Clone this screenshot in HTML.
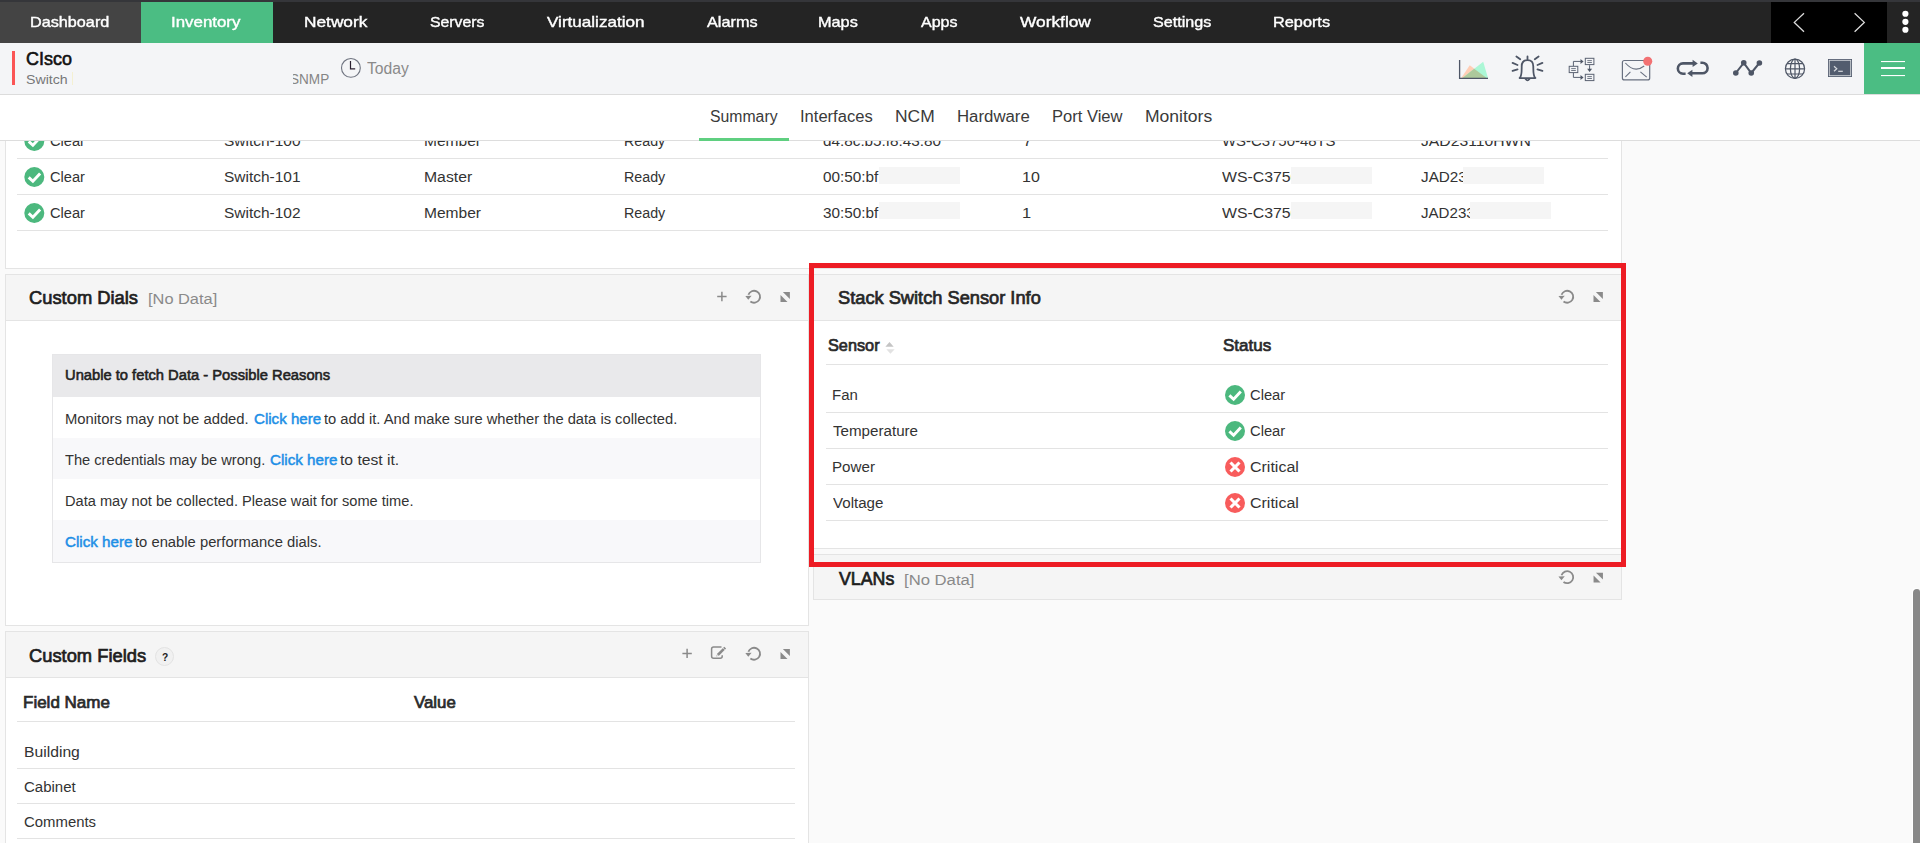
<!DOCTYPE html>
<html><head><meta charset="utf-8"><title>Switch Snapshot</title>
<style>
html,body{margin:0;padding:0}
html{width:1920px;height:843px;overflow:hidden}
body{width:1920px;height:843px;overflow:hidden;background:#fafafa;position:relative;font-family:"Liberation Sans",sans-serif}
.a{position:absolute;box-sizing:border-box}
.t{position:absolute;white-space:nowrap;line-height:1;transform-origin:0 0;font-family:"Liberation Sans",sans-serif}
svg{position:absolute;overflow:visible}
.panel{background:#fff;border:1px solid #e4e4e4}
.phead{background:#f5f5f5;border-bottom:1px solid #e4e4e4}
.ln{background:#e3e3e3;height:1px}
.mask{background:#f5f5f5}
svg.ov{left:0;top:0;pointer-events:none}

</style></head>
<body>
<!-- ===== content panels ===== -->
<div class="a panel" style="left:5px;top:100px;width:1617px;height:169px"></div>
<div class="a ln" style="left:17px;top:158px;width:1591px"></div>
<div class="a ln" style="left:17px;top:194px;width:1591px"></div>
<div class="a ln" style="left:17px;top:230px;width:1591px"></div>
<span class="t" style="left:49.89px;top:133px;font-size:15.5px;font-weight:400;color:#333;transform:scaleX(0.9444)">Clear</span>
<span class="t" style="left:223.65px;top:133px;font-size:15.5px;font-weight:400;color:#333;transform:scaleX(0.9980)">Switch-100</span>
<span class="t" style="left:423.65px;top:133px;font-size:15.5px;font-weight:400;color:#333;transform:scaleX(1.0027)">Member</span>
<span class="t" style="left:624.05px;top:133px;font-size:15.5px;font-weight:400;color:#333;transform:scaleX(0.9195)">Ready</span>
<span class="t" style="left:822.86px;top:133px;font-size:15.5px;font-weight:400;color:#333;transform:scaleX(0.9857)">d4:8c:b5:f8:43:80</span>
<span class="t" style="left:1022.61px;top:133px;font-size:15.5px;font-weight:400;color:#333;transform:scaleX(1.0571)">7</span>
<span class="t" style="left:1221.60px;top:133px;font-size:15.5px;font-weight:400;color:#333;transform:scaleX(0.9620)">WS-C3750-48TS</span>
<span class="t" style="left:1420.75px;top:133px;font-size:15.5px;font-weight:400;color:#333;transform:scaleX(1.0136)">JAD23110HWN</span>
<svg class="ov" width="1920" height="843" viewBox="0 0 1920 843"><circle cx="34.3" cy="141" r="10" fill="#4cb87e"/><path d="M28.699999999999996 141.4 L32.9 145.3 L40.099999999999994 137.4" fill="none" stroke="#fff" stroke-width="2.9" stroke-linecap="butt" stroke-linejoin="miter"/><circle cx="34.3" cy="177" r="10" fill="#4cb87e"/><path d="M28.699999999999996 177.4 L32.9 181.3 L40.099999999999994 173.4" fill="none" stroke="#fff" stroke-width="2.9" stroke-linecap="butt" stroke-linejoin="miter"/><circle cx="34.3" cy="213" r="10" fill="#4cb87e"/><path d="M28.699999999999996 213.4 L32.9 217.3 L40.099999999999994 209.4" fill="none" stroke="#fff" stroke-width="2.9" stroke-linecap="butt" stroke-linejoin="miter"/></svg>

<!-- Custom Dials -->
<div class="a panel" style="left:5px;top:274px;width:804px;height:352px"></div>
<div class="a phead" style="left:6px;top:275px;width:802px;height:46px"></div>
<div class="a" style="left:52px;top:354px;width:709px;height:209px;border:1px solid #e6e6e8;background:#fff"></div>
<div class="a" style="left:53px;top:355px;width:707px;height:42px;background:#e9e9eb"></div>
<div class="a" style="left:53px;top:438px;width:707px;height:41px;background:#f8f8fa"></div>
<div class="a" style="left:53px;top:520px;width:707px;height:42px;background:#f8f8fa"></div>

<!-- VLANs (under sensor) -->
<div class="a panel" style="left:813px;top:554px;width:809px;height:46px;background:#f5f5f5"></div>

<!-- Sensor -->
<div class="a panel" style="left:813px;top:274px;width:809px;height:275px"></div>
<div class="a phead" style="left:814px;top:275px;width:807px;height:46px"></div>
<div class="a ln" style="left:826px;top:364px;width:1782px;width:782px"></div>
<div class="a ln" style="left:826px;top:412px;width:782px"></div>
<div class="a ln" style="left:826px;top:448px;width:782px"></div>
<div class="a ln" style="left:826px;top:484px;width:782px"></div>
<div class="a ln" style="left:826px;top:520px;width:782px"></div>

<!-- Custom Fields -->
<div class="a panel" style="left:5px;top:631px;width:804px;height:212px;border-bottom:0"></div>
<div class="a phead" style="left:6px;top:632px;width:802px;height:46px"></div>
<div class="a ln" style="left:17px;top:721px;width:778px"></div>
<div class="a ln" style="left:17px;top:768px;width:778px"></div>
<div class="a ln" style="left:17px;top:803px;width:778px"></div>
<div class="a ln" style="left:17px;top:838px;width:778px"></div>

<!-- red highlight -->
<div class="a" style="left:809px;top:263px;width:817px;height:304px;border:5px solid #ed1c24"></div>

<!-- scrollbar -->
<div class="a" style="left:1913px;top:589px;width:7px;height:254px;background:#888;border-radius:4px 3px 0 0;box-shadow:-1px -1px 0 0 #fff"></div>

<!-- ===== tab bar ===== -->
<div class="a" style="left:0;top:95px;width:1920px;height:46px;background:#fff;border-bottom:1px solid #ddd"></div>
<div class="a" style="left:699px;top:138px;width:90px;height:3px;background:#5fcf80"></div>

<!-- ===== sub header ===== -->
<div class="a" style="left:0;top:43px;width:1920px;height:52px;background:#f4f5f7;border-bottom:1px solid #dcdcdc"></div>
<div class="a" style="left:12px;top:51px;width:3px;height:34px;background:#fb5555"></div>
<div class="a" style="left:72px;top:72px;width:1px;height:13px;background:#f4f0d2"></div>
<div class="a" style="left:1864px;top:43px;width:56px;height:51px;background:#4bbd83"></div>

<!-- ===== nav ===== -->
<div class="a" style="left:0;top:0;width:1920px;height:43px;background:#242424"></div>
<div class="a" style="left:0;top:0;width:1920px;height:2px;background:#35363a"></div>
<div class="a" style="left:0;top:2px;width:141px;height:41px;background:#444"></div>
<div class="a" style="left:141px;top:2px;width:132px;height:41px;background:#4bbd83"></div>
<div class="a" style="left:1771px;top:2px;width:116px;height:41px;background:#000"></div>
<div class="a" style="left:155px;top:646.5px;width:19px;height:19px;border-radius:50%;background:#f1f1f1;border:1px solid #e3e3e3"></div>
<span class="t" style="left:30.46px;top:14.5px;font-size:14.2px;font-weight:400;color:#fff;-webkit-text-stroke:0.38px #fff;will-change:transform;transform:scaleX(1.1424)">Dashboard</span>
<span class="t" style="left:171.41px;top:14.5px;font-size:14.2px;font-weight:400;color:#fff;-webkit-text-stroke:0.38px #fff;will-change:transform;transform:scaleX(1.1896)">Inventory</span>
<span class="t" style="left:303.88px;top:14.5px;font-size:14.2px;font-weight:400;color:#fff;-webkit-text-stroke:0.38px #fff;will-change:transform;transform:scaleX(1.2176)">Network</span>
<span class="t" style="left:430.04px;top:14.5px;font-size:14.2px;font-weight:400;color:#fff;-webkit-text-stroke:0.38px #fff;will-change:transform;transform:scaleX(1.1125)">Servers</span>
<span class="t" style="left:546.90px;top:14.5px;font-size:14.2px;font-weight:400;color:#fff;-webkit-text-stroke:0.38px #fff;will-change:transform;transform:scaleX(1.2037)">Virtualization</span>
<span class="t" style="left:706.89px;top:14.5px;font-size:14.2px;font-weight:400;color:#fff;-webkit-text-stroke:0.38px #fff;will-change:transform;transform:scaleX(1.1455)">Alarms</span>
<span class="t" style="left:818.45px;top:14.5px;font-size:14.2px;font-weight:400;color:#fff;-webkit-text-stroke:0.38px #fff;will-change:transform;transform:scaleX(1.1463)">Maps</span>
<span class="t" style="left:920.88px;top:14.5px;font-size:14.2px;font-weight:400;color:#fff;-webkit-text-stroke:0.38px #fff;will-change:transform;transform:scaleX(1.1287)">Apps</span>
<span class="t" style="left:1019.91px;top:14.5px;font-size:14.2px;font-weight:400;color:#fff;-webkit-text-stroke:0.38px #fff;will-change:transform;transform:scaleX(1.2205)">Workflow</span>
<span class="t" style="left:1153.03px;top:14.5px;font-size:14.2px;font-weight:400;color:#fff;-webkit-text-stroke:0.38px #fff;will-change:transform;transform:scaleX(1.1366)">Settings</span>
<span class="t" style="left:1273.45px;top:14.5px;font-size:14.2px;font-weight:400;color:#fff;-webkit-text-stroke:0.38px #fff;will-change:transform;transform:scaleX(1.1482)">Reports</span>
<span class="t" style="left:26.47px;top:50px;font-size:18.5px;font-weight:400;color:#111;-webkit-text-stroke:0.6px #111;transform:scaleX(0.9696)">CIsco</span>
<span class="t" style="left:26.41px;top:73px;font-size:13.5px;font-weight:400;color:#777;transform:scaleX(1.0484)">Switch</span>
<span class="t" style="left:367.06px;top:61px;font-size:16px;font-weight:400;color:#8a8a8a;transform:scaleX(0.9799)">Today</span>
<span class="t" style="left:290.07px;top:72px;font-size:14px;font-weight:400;color:#858585;transform:scaleX(0.9692)">SNMP</span>
<span class="t" style="left:709.66px;top:109px;font-size:16px;font-weight:400;color:#3a3a3a;transform:scaleX(0.9867)">Summary</span>
<span class="t" style="left:799.65px;top:109px;font-size:16px;font-weight:400;color:#3a3a3a;transform:scaleX(1.0344)">Interfaces</span>
<span class="t" style="left:894.84px;top:109px;font-size:16px;font-weight:400;color:#3a3a3a;transform:scaleX(1.0912)">NCM</span>
<span class="t" style="left:956.59px;top:109px;font-size:16px;font-weight:400;color:#3a3a3a;transform:scaleX(1.0489)">Hardware</span>
<span class="t" style="left:1051.71px;top:109px;font-size:16px;font-weight:400;color:#3a3a3a;transform:scaleX(1.0343)">Port View</span>
<span class="t" style="left:1144.83px;top:109px;font-size:16px;font-weight:400;color:#3a3a3a;transform:scaleX(1.0958)">Monitors</span>
<span class="t" style="left:49.89px;top:169px;font-size:15.5px;font-weight:400;color:#333;transform:scaleX(0.9444)">Clear</span>
<span class="t" style="left:223.65px;top:169px;font-size:15.5px;font-weight:400;color:#333;transform:scaleX(0.9980)">Switch-101</span>
<span class="t" style="left:423.63px;top:169px;font-size:15.5px;font-weight:400;color:#333;transform:scaleX(1.0164)">Master</span>
<span class="t" style="left:624.05px;top:169px;font-size:15.5px;font-weight:400;color:#333;transform:scaleX(0.9195)">Ready</span>
<span class="t" style="left:823.11px;top:169px;font-size:15.5px;font-weight:400;color:#333;transform:scaleX(0.9874)">00:50:bf</span>
<span class="t" style="left:1022.11px;top:169px;font-size:15.5px;font-weight:400;color:#333;transform:scaleX(1.0323)">10</span>
<span class="t" style="left:1221.60px;top:169px;font-size:15.5px;font-weight:400;color:#333;transform:scaleX(1.0206)">WS-C3750</span>
<span class="t" style="left:1420.75px;top:169px;font-size:15.5px;font-weight:400;color:#333;transform:scaleX(0.9846)">JAD23</span>
<span class="t" style="left:49.89px;top:205px;font-size:15.5px;font-weight:400;color:#333;transform:scaleX(0.9444)">Clear</span>
<span class="t" style="left:223.65px;top:205px;font-size:15.5px;font-weight:400;color:#333;transform:scaleX(0.9980)">Switch-102</span>
<span class="t" style="left:423.65px;top:205px;font-size:15.5px;font-weight:400;color:#333;transform:scaleX(1.0027)">Member</span>
<span class="t" style="left:624.05px;top:205px;font-size:15.5px;font-weight:400;color:#333;transform:scaleX(0.9195)">Ready</span>
<span class="t" style="left:823.11px;top:205px;font-size:15.5px;font-weight:400;color:#333;transform:scaleX(0.9874)">30:50:bf</span>
<span class="t" style="left:1022.07px;top:205px;font-size:15.5px;font-weight:400;color:#333;transform:scaleX(1.0615)">1</span>
<span class="t" style="left:1221.60px;top:205px;font-size:15.5px;font-weight:400;color:#333;transform:scaleX(1.0206)">WS-C3750</span>
<span class="t" style="left:1420.76px;top:205px;font-size:15.5px;font-weight:400;color:#333;transform:scaleX(0.9733)">JAD233</span>
<span class="t" style="left:29.11px;top:289px;font-size:18.8px;font-weight:400;color:#1e1e1e;-webkit-text-stroke:0.72px #1e1e1e;transform:scaleX(0.9761)">Custom Dials</span>
<span class="t" style="left:148.04px;top:291px;font-size:15.5px;font-weight:400;color:#8a8a8a;transform:scaleX(1.0567)">[No Data]</span>
<span class="t" style="left:65.25px;top:367px;font-size:15.5px;font-weight:400;color:#222;-webkit-text-stroke:0.6px #222;transform:scaleX(0.9498)">Unable to fetch Data - Possible Reasons</span>
<span class="t" style="left:65.00px;top:411px;font-size:15.5px;font-weight:400;color:#333;transform:scaleX(0.9562)">Monitors may not be added.</span>
<span class="t" style="left:253.91px;top:411px;font-size:15.5px;font-weight:400;color:#1d8fe6;-webkit-text-stroke:0.5px #1d8fe6;transform:scaleX(0.9735)">Click here</span>
<span class="t" style="left:324.16px;top:411px;font-size:15.5px;font-weight:400;color:#333;transform:scaleX(0.9490)">to add it. And make sure whether the data is collected.</span>
<span class="t" style="left:64.96px;top:452px;font-size:15.5px;font-weight:400;color:#333;transform:scaleX(0.9446)">The credentials may be wrong.</span>
<span class="t" style="left:269.71px;top:452px;font-size:15.5px;font-weight:400;color:#1d8fe6;-webkit-text-stroke:0.5px #1d8fe6;transform:scaleX(0.9794)">Click here</span>
<span class="t" style="left:340.45px;top:452px;font-size:15.5px;font-weight:400;color:#333;transform:scaleX(1.0105)">to test it.</span>
<span class="t" style="left:65.02px;top:493px;font-size:15.5px;font-weight:400;color:#333;transform:scaleX(0.9428)">Data may not be collected. Please wait for some time.</span>
<span class="t" style="left:64.71px;top:534px;font-size:15.5px;font-weight:400;color:#1d8fe6;-webkit-text-stroke:0.5px #1d8fe6;transform:scaleX(0.9794)">Click here</span>
<span class="t" style="left:135.36px;top:534px;font-size:15.5px;font-weight:400;color:#333;transform:scaleX(0.9536)">to enable performance dials.</span>
<span class="t" style="left:837.71px;top:289px;font-size:18.8px;font-weight:400;color:#262626;-webkit-text-stroke:0.72px #262626;transform:scaleX(0.9714)">Stack Switch Sensor Info</span>
<span class="t" style="left:828.35px;top:338px;font-size:16.6px;font-weight:400;color:#2a2a2a;-webkit-text-stroke:0.7px #2a2a2a;transform:scaleX(0.9810)">Sensor</span>
<span class="t" style="left:1223.44px;top:338px;font-size:16.6px;font-weight:400;color:#2a2a2a;-webkit-text-stroke:0.7px #2a2a2a;transform:scaleX(1.0258)">Status</span>
<span class="t" style="left:832.24px;top:387px;font-size:15.5px;font-weight:400;color:#333;transform:scaleX(0.9653)">Fan</span>
<span class="t" style="left:833.21px;top:423px;font-size:15.5px;font-weight:400;color:#333;transform:scaleX(0.9773)">Temperature</span>
<span class="t" style="left:832.23px;top:459px;font-size:15.5px;font-weight:400;color:#333;transform:scaleX(0.9788)">Power</span>
<span class="t" style="left:833.21px;top:495px;font-size:15.5px;font-weight:400;color:#333;transform:scaleX(0.9744)">Voltage</span>
<span class="t" style="left:1250.49px;top:387px;font-size:15.5px;font-weight:400;color:#333;transform:scaleX(0.9500)">Clear</span>
<span class="t" style="left:1250.49px;top:423px;font-size:15.5px;font-weight:400;color:#333;transform:scaleX(0.9500)">Clear</span>
<span class="t" style="left:1250.43px;top:459px;font-size:15.5px;font-weight:400;color:#333;transform:scaleX(1.0308)">Critical</span>
<span class="t" style="left:1250.43px;top:495px;font-size:15.5px;font-weight:400;color:#333;transform:scaleX(1.0308)">Critical</span>
<span class="t" style="left:839.17px;top:570px;font-size:18.8px;font-weight:400;color:#1e1e1e;-webkit-text-stroke:0.72px #1e1e1e;transform:scaleX(0.9464)">VLANs</span>
<span class="t" style="left:904.12px;top:572px;font-size:15.5px;font-weight:400;color:#8a8a8a;transform:scaleX(1.0756)">[No Data]</span>
<span class="t" style="left:28.71px;top:647px;font-size:18.8px;font-weight:400;color:#1e1e1e;-webkit-text-stroke:0.72px #1e1e1e;transform:scaleX(0.9753)">Custom Fields</span>
<span class="t" style="left:162.34px;top:652px;font-size:11px;font-weight:700;color:#222;transform:scaleX(0.9273)">?</span>
<span class="t" style="left:22.68px;top:695px;font-size:16.6px;font-weight:400;color:#2a2a2a;-webkit-text-stroke:0.7px #2a2a2a;transform:scaleX(1.0240)">Field Name</span>
<span class="t" style="left:414.21px;top:695px;font-size:16.6px;font-weight:400;color:#2a2a2a;-webkit-text-stroke:0.7px #2a2a2a;transform:scaleX(1.0158)">Value</span>
<span class="t" style="left:23.73px;top:744px;font-size:15.5px;font-weight:400;color:#333;transform:scaleX(1.0123)">Building</span>
<span class="t" style="left:24.27px;top:779px;font-size:15.5px;font-weight:400;color:#333;transform:scaleX(0.9676)">Cabinet</span>
<span class="t" style="left:24.28px;top:814px;font-size:15.5px;font-weight:400;color:#333;transform:scaleX(0.9614)">Comments</span>
<div class="a mask" style="left:879px;top:167px;width:81px;height:17px"></div>
<div class="a mask" style="left:879px;top:202px;width:81px;height:17px"></div>
<div class="a mask" style="left:1291px;top:167px;width:81px;height:17px"></div>
<div class="a mask" style="left:1291px;top:202px;width:81px;height:17px"></div>
<div class="a mask" style="left:1463px;top:167px;width:81px;height:17px"></div>
<div class="a mask" style="left:1470px;top:202px;width:81px;height:17px"></div>

<div class="a" style="left:280px;top:70px;width:13px;height:20px;background:#f4f5f7"></div>
<svg class="ov" width="1920" height="843" viewBox="0 0 1920 843"><circle cx="1235" cy="395" r="10" fill="#4cb87e"/><path d="M1229.4 395.4 L1233.6 399.3 L1240.8 391.4" fill="none" stroke="#fff" stroke-width="2.9" stroke-linecap="butt" stroke-linejoin="miter"/><circle cx="1235" cy="431" r="10" fill="#4cb87e"/><path d="M1229.4 431.4 L1233.6 435.3 L1240.8 427.4" fill="none" stroke="#fff" stroke-width="2.9" stroke-linecap="butt" stroke-linejoin="miter"/><circle cx="1235" cy="467" r="10" fill="#f85c5c"/><path d="M1230.5 462.5 L1239.5 471.5 M1239.5 462.5 L1230.5 471.5" fill="none" stroke="#fff" stroke-width="3.1" stroke-linecap="butt"/><circle cx="1235" cy="503" r="10" fill="#f85c5c"/><path d="M1230.5 498.5 L1239.5 507.5 M1239.5 498.5 L1230.5 507.5" fill="none" stroke="#fff" stroke-width="3.1" stroke-linecap="butt"/><path d="M717.1999999999999 296.5 H726.6 M721.9 291.8 V301.2" stroke="#8a8a8a" stroke-width="1.5" fill="none"/><path d="M748.38 294.80 A6.0 6.0 0 1 1 750.36 301.48" fill="none" stroke="#8a8a8a" stroke-width="1.8"/><path d="M745.30 296.05 L751.60 295.85 L748.30 299.75 Z" fill="#8a8a8a"/><path d="M782.90 292.10 H789.90 V299.00 Z" fill="#8a8a8a"/><path d="M780.50 295.00 V302.00 H787.50 Z" fill="#8a8a8a"/><path d="M1561.53 294.80 A6.0 6.0 0 1 1 1563.51 301.48" fill="none" stroke="#8a8a8a" stroke-width="1.8"/><path d="M1558.45 296.05 L1564.75 295.85 L1561.45 299.75 Z" fill="#8a8a8a"/><path d="M1595.90 292.10 H1602.90 V299.00 Z" fill="#8a8a8a"/><path d="M1593.50 295.00 V302.00 H1600.50 Z" fill="#8a8a8a"/><path d="M1561.53 575.25 A6.0 6.0 0 1 1 1563.51 581.93" fill="none" stroke="#8a8a8a" stroke-width="1.8"/><path d="M1558.45 576.50 L1564.75 576.30 L1561.45 580.20 Z" fill="#8a8a8a"/><path d="M1595.95 572.70 H1602.95 V579.60 Z" fill="#8a8a8a"/><path d="M1593.55 575.60 V582.60 H1600.55 Z" fill="#8a8a8a"/><path d="M682.4 653.4 H691.8000000000001 M687.1 648.6999999999999 V658.1" stroke="#8a8a8a" stroke-width="1.5" fill="none"/><path d="M721.50 647.10 H713.60 Q711.60 647.10 711.60 649.10 V656.30 Q711.60 658.30 713.60 658.30 H720.20 Q722.20 658.30 722.20 656.30 V655.20" fill="none" stroke="#8a8a8a" stroke-width="1.5"/><path d="M726.10 648.60 L724.30 646.80 L717.40 653.60 L716.30 656.60 L719.20 655.40 Z" fill="#8a8a8a"/><path d="M724.90 649.80 L723.10 648.00" stroke="#f5f5f5" stroke-width="0.7"/><circle cx="717.70" cy="655.25" r="0.65" fill="#f5f5f5"/><path d="M748.38 651.80 A6.0 6.0 0 1 1 750.36 658.48" fill="none" stroke="#8a8a8a" stroke-width="1.8"/><path d="M745.30 653.05 L751.60 652.85 L748.30 656.75 Z" fill="#8a8a8a"/><path d="M782.90 649.00 H789.90 V655.90 Z" fill="#8a8a8a"/><path d="M780.50 651.90 V658.90 H787.50 Z" fill="#8a8a8a"/><path d="M885.4 346.8 L889.5 342.1 L893.7 346.8 Z" fill="#c4c4c4"/><path d="M886.4 349.2 L890.4 353.7 L894.7 349.2 Z" fill="#e2e2e2"/><circle cx="350.9" cy="67.9" r="9.4" fill="none" stroke="#6f7480" stroke-width="1.1"/><path d="M350.5 60.9 V68.9 H355.2" fill="none" stroke="#2a2030" stroke-width="1.2"/><path d="M1804 13.2 L1794.3 22.4 L1804 31.7" fill="none" stroke="#dcdcdc" stroke-width="1.3"/><path d="M1854.6 13.2 L1864.3 22.4 L1854.6 31.7" fill="none" stroke="#dcdcdc" stroke-width="1.3"/><circle cx="1905.4" cy="13.75" r="3.1" fill="#fff"/><circle cx="1905.4" cy="21.8" r="3.1" fill="#fff"/><circle cx="1905.4" cy="29.75" r="3.1" fill="#fff"/><rect x="1881" y="61" width="24" height="1.1" fill="#fff"/><rect x="1881" y="67" width="24" height="2" fill="#fff"/><rect x="1881" y="75" width="24" height="1.1" fill="#fff"/><path d="M1461.25 78 L1469.75 65.3 L1486.7 78 Z" fill="#ffceb6"/><path d="M1462.5 78 L1483.2 61.75 L1488 78 Z" fill="#abf7d6"/><path d="M1462.5 78 L1474.2 68.8 L1486.7 78 Z" fill="#adc99c"/><path d="M1459.6 60.1 V78.4 H1488" fill="none" stroke="#4e5666" stroke-width="1.3"/><path d="M1527.5 56.4 V59.6 M1519.6 78.1 C1521.9 76.6 1521.7 71.5 1521.7 66.4 C1521.7 62.4 1524.1 60.1 1527.5 60.1 C1530.9 60.1 1533.3 62.4 1533.3 66.4 C1533.3 71.5 1533.1 76.6 1535.4 78.1 Z M1525.6 79 Q1527.5 81.6 1529.4 79" fill="none" stroke="#4e5666" stroke-width="1.8" stroke-linejoin="round" stroke-linecap="round"/><path d="M1516.4 56.5 L1520.2 59.3 M1512.6 62.9 L1517.5 65 M1512.6 70.9 L1517.5 69.3 M1538.6 56.5 L1534.8 59.3 M1542.4 62.9 L1537.5 65 M1542.4 70.9 L1537.5 69.3" stroke="#4e5666" stroke-width="1.8" fill="none" stroke-linecap="round"/><rect x="1585.3" y="58.3" width="8.6" height="6.3" fill="none" stroke="#5a6272" stroke-width="1"/><path d="M1587.3 60.599999999999994 H1591.8999999999999 M1587.3 62.5 H1591.8999999999999" stroke="#5a6272" stroke-width="0.85"/><rect x="1569.2" y="66.3" width="8.6" height="6.3" fill="none" stroke="#5a6272" stroke-width="1"/><path d="M1571.2 68.6 H1575.8 M1571.2 70.5 H1575.8" stroke="#5a6272" stroke-width="0.85"/><rect x="1585.3" y="74.3" width="8.6" height="6.3" fill="none" stroke="#5a6272" stroke-width="1"/><path d="M1587.3 76.6 H1591.8999999999999 M1587.3 78.5 H1591.8999999999999" stroke="#5a6272" stroke-width="0.85"/><path d="M1573.4 66 V61.4 H1581.5 M1573.4 72.9 V77.4 H1581.5 M1589.6 65.2 V69.6" fill="none" stroke="#5a6272" stroke-width="1"/><path d="M1580.5 58.9 L1583.6 61.4 L1580.5 63.9 Z M1580.5 74.9 L1583.6 77.4 L1580.5 79.9 Z M1587.1 68.8 L1592.1 68.8 L1589.6 72 Z" fill="#4e5666"/><rect x="1622.4" y="60.5" width="27.3" height="19.4" rx="2" fill="none" stroke="#687080" stroke-width="1.2"/><path d="M1625.4 63 Q1634.5 73.5 1644.2 66" fill="none" stroke="#687080" stroke-width="1.1"/><path d="M1625.4 76.8 L1630.4 71.8 M1646.7 77.2 L1640.4 71.8" stroke="#687080" stroke-width="1.1"/><circle cx="1647.75" cy="61.3" r="4.5" fill="#f27173"/><path d="M1694 63.4 H1683 A5.15 5.15 0 0 0 1683 73.7 H1685.6 M1691 73.3 H1702.3 A5.3 5.3 0 0 0 1702.3 62.7 H1700.4" fill="none" stroke="#4e5666" stroke-width="2.6"/><path d="M1692.6 59.8 L1697.8 63.4 L1692.6 67 Z M1692.4 69.7 L1687.2 73.3 L1692.4 76.9 Z" fill="#4e5666"/><path d="M1735.8 73 L1743.75 62.8 L1751.25 73 L1759.4 63" fill="none" stroke="#4e5666" stroke-width="2"/><circle cx="1735.8" cy="73" r="2.8" fill="#4e5666"/><circle cx="1743.75" cy="62.8" r="2.8" fill="#4e5666"/><circle cx="1751.25" cy="73" r="2.8" fill="#4e5666"/><circle cx="1759.4" cy="63" r="2.8" fill="#4e5666"/><g fill="none" stroke="#4e5666" stroke-width="1.2"><circle cx="1795" cy="68.8" r="9.6"/><ellipse cx="1795" cy="68.8" rx="4.6" ry="9.6"/><path d="M1795 59.2 V78.4 M1785.4 68.8 H1804.6 M1787 63.6 H1803 M1787 74 H1803"/></g><rect x="1828" y="59" width="24" height="18" fill="#525c6e"/><rect x="1829.3" y="60.3" width="21.4" height="15.4" fill="none" stroke="#d5d8dd" stroke-width="0.9"/><path d="M1834 66.3 L1836.8 68.8 L1834 71.3" fill="none" stroke="#d5d8dd" stroke-width="1.2"/><path d="M1838.2 71.3 H1842.8" stroke="#d5d8dd" stroke-width="1.2"/></svg>

</body></html>
